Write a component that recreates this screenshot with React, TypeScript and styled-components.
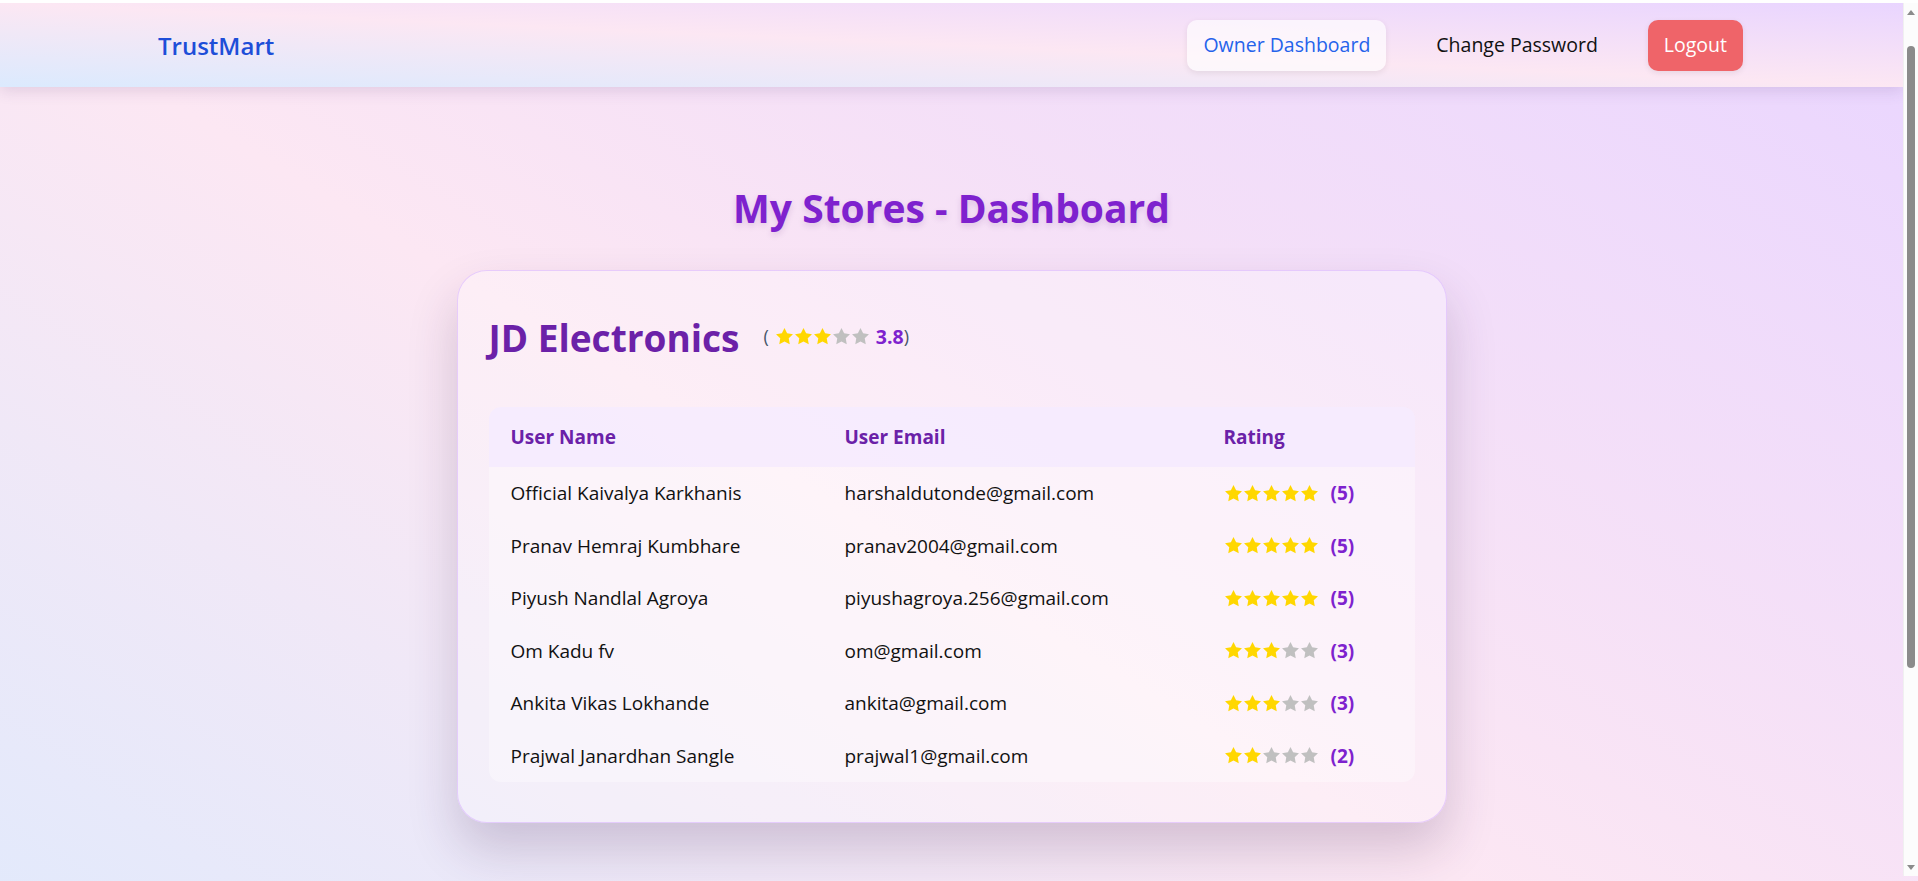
import styled, { createGlobalStyle } from "styled-components";

const GlobalStyle = createGlobalStyle`
  html, body {
    margin: 0;
    padding: 0;
  }

  body {
    font-family: "Open Sans", "Noto Sans", sans-serif;
    background: linear-gradient(to top right, #dbeafe 0%, #fce7f3 50%, #e9d5ff 100%);
    border-top: 3px solid #fff;
    padding-right: 15px;
    color: #111;
  }
`;

/* the reference shows the browser's scrollbar; headless hides it, so draw one */
const ScrollRail = styled.div`
  position: fixed;
  top: 3px;
  right: 0;
  bottom: 5px;
  width: 15px;
  background: #fcfcfc;
  border-left: 1px solid #f0f0f0;
  box-sizing: border-box;
`;

const ScrollThumb = styled.div`
  position: absolute;
  top: 43px;
  left: 3px;
  width: 8px;
  height: 622px;
  border-radius: 5px;
  background: #8b8b8b;
`;

const ScrollArrow = styled.div<{ $down?: boolean }>`
  position: absolute;
  left: 3px;
  ${(p) => (p.$down ? "bottom: 6px;" : "top: 7px;")}
  width: 0;
  height: 0;
  border-left: 4px solid transparent;
  border-right: 4px solid transparent;
  ${(p) => (p.$down ? "border-top: 5px solid #8b8b8b;" : "border-bottom: 5px solid #8b8b8b;")}
`;

const Navbar = styled.nav`
  display: flex;
  align-items: center;
  justify-content: space-between;
  height: 84px;
  padding: 0 160px 0 158px;
  background: linear-gradient(to top right, #dbeafe 0%, #fce7f3 50%, #e9d5ff 100%);
  box-shadow: 0 4px 14px rgba(80, 40, 110, 0.14);
`;

const Brand = styled.div`
  font-size: 24px;
  font-weight: 600;
  color: #1d4ed8;
`;

const NavLinks = styled.div`
  display: flex;
  align-items: center;
  gap: 34px;
`;

const NavButton = styled.button<{ $variant?: "active" | "plain" | "danger" }>`
  font-family: inherit;
  font-size: 19.5px;
  line-height: 30px;
  padding: 10.5px 16px;
  border: none;
  border-radius: 10px;
  cursor: pointer;
  font-weight: ${(p) => (p.$variant === "danger" ? 400 : 500)};
  color: ${(p) =>
    p.$variant === "active" ? "#2563eb" : p.$variant === "danger" ? "#fff" : "#111"};
  background: ${(p) =>
    p.$variant === "active"
      ? "rgba(255, 255, 255, 0.65)"
      : p.$variant === "danger"
      ? "#ef6469"
      : "transparent"};
  box-shadow: ${(p) =>
    p.$variant === "plain" ? "none" : "0 2px 6px rgba(0, 0, 0, 0.08)"};
`;

const Main = styled.main`
  padding: 97px 0 338px;
`;

const PageTitle = styled.h1`
  margin: 0;
  text-align: center;
  font-size: 39px;
  line-height: 48px;
  font-weight: 700;
  color: #7e22ce;
  text-shadow: 0 3px 6px rgba(90, 30, 120, 0.15);
`;

const Card = styled.section`
  box-sizing: border-box;
  width: 990px;
  margin: 38px auto 0;
  padding: 43px 31px 40px;
  border-radius: 30px;
  background: rgba(255, 255, 255, 0.3);
  border: 1px solid rgba(216, 180, 254, 0.6);
  box-shadow: 0 26px 50px rgba(60, 30, 80, 0.2);
`;

const StoreHeader = styled.div`
  display: flex;
  align-items: center;
  gap: 24px;
  margin-bottom: 45px;
`;

const StoreName = styled.h2`
  margin: 0;
  font-size: 37px;
  line-height: 48px;
  font-weight: 700;
  color: #6b21a8;
`;

const AvgRating = styled.span`
  display: inline-flex;
  align-items: center;
  font-size: 18px;
  color: #475569;
  margin-top: -4px;
`;

const Score = styled.b`
  margin-left: 6px;
  font-size: 19.5px;
  color: #7e22ce;
  font-weight: 700;
`;

const Table = styled.table`
  width: 100%;
  border-collapse: separate;
  border-spacing: 0;
  border-radius: 12px;
  overflow: hidden;
  background: rgba(255, 255, 255, 0.35);
  table-layout: fixed;
`;

const HeadCell = styled.th<{ $width: number }>`
  box-sizing: border-box;
  width: ${(p) => p.$width}px;
  text-align: left;
  padding: 15px 22px;
  font-size: 19px;
  line-height: 30px;
  font-weight: 700;
  color: #6b21a8;
  background: rgba(243, 232, 255, 0.7);
`;

const Cell = styled.td`
  padding: 11.25px 22px;
  font-size: 19px;
  line-height: 30px;
  color: #111;
  white-space: nowrap;
  vertical-align: middle;
`;

const RatingWrap = styled.div`
  display: flex;
  align-items: center;
  gap: 12px;
  height: 30px;
`;

const Stars = styled.span<{ $inset?: boolean }>`
  display: inline-flex;
  align-items: center;
  margin-left: ${(p) => (p.$inset ? "6px" : "0")};
`;

const Count = styled.b`
  color: #7e22ce;
  font-weight: 700;
`;

function Star({ filled }: { filled: boolean }) {
  return (
    <svg width="19" height="19" viewBox="0.8 0.8 22.4 22.4" aria-hidden="true">
      <polygon
        points="12,2 15.09,8.26 22,9.27 17,14.14 18.18,21.02 12,17.77 5.82,21.02 7,14.14 2,9.27 8.91,8.26"
        fill={filled ? "#ffd700" : "#c0c0c0"}
      />
    </svg>
  );
}

function StarRow({ value, inset }: { value: number; inset?: boolean }) {
  return (
    <Stars $inset={inset}>
      {[1, 2, 3, 4, 5].map((i) => (
        <Star key={i} filled={i <= Math.floor(value)} />
      ))}
    </Stars>
  );
}

const ratings = [
  { name: "Official Kaivalya Karkhanis", email: "harshaldutonde@gmail.com", rating: 5 },
  { name: "Pranav Hemraj Kumbhare", email: "pranav2004@gmail.com", rating: 5 },
  { name: "Piyush Nandlal Agroya", email: "piyushagroya.256@gmail.com", rating: 5 },
  { name: "Om Kadu fv", email: "om@gmail.com", rating: 3 },
  { name: "Ankita Vikas Lokhande", email: "ankita@gmail.com", rating: 3 },
  { name: "Prajwal Janardhan Sangle", email: "prajwal1@gmail.com", rating: 2 },
];

function App() {
  return (
    <>
      <GlobalStyle />
      <Navbar>
        <Brand>TrustMart</Brand>
        <NavLinks>
          <NavButton $variant="active">Owner Dashboard</NavButton>
          <NavButton $variant="plain">Change Password</NavButton>
          <NavButton $variant="danger">Logout</NavButton>
        </NavLinks>
      </Navbar>
      <Main>
        <PageTitle>My Stores - Dashboard</PageTitle>
        <Card>
          <StoreHeader>
            <StoreName>JD Electronics</StoreName>
            <AvgRating>
              (
              <StarRow value={3.8} inset />
              <Score>3.8</Score>)
            </AvgRating>
          </StoreHeader>
          <Table>
            <thead>
              <tr>
                <HeadCell $width={334}>User Name</HeadCell>
                <HeadCell $width={379}>User Email</HeadCell>
                <HeadCell $width={213}>Rating</HeadCell>
              </tr>
            </thead>
            <tbody>
              {ratings.map((r) => (
                <tr key={r.email}>
                  <Cell>{r.name}</Cell>
                  <Cell>{r.email}</Cell>
                  <Cell>
                    <RatingWrap>
                      <StarRow value={r.rating} />
                      <Count>({r.rating})</Count>
                    </RatingWrap>
                  </Cell>
                </tr>
              ))}
            </tbody>
          </Table>
        </Card>
      </Main>
      <ScrollRail>
        <ScrollArrow />
        <ScrollThumb />
        <ScrollArrow $down />
      </ScrollRail>
    </>
  );
}

export default App;
